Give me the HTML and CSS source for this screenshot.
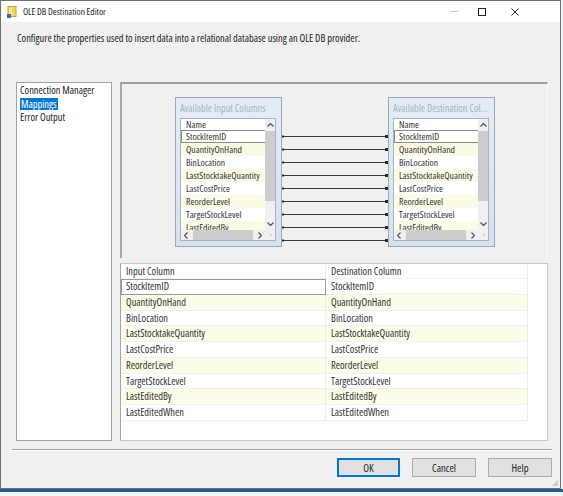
FILE: index.html
```html
<!DOCTYPE html>
<html>
<head>
<meta charset="utf-8">
<title>OLE DB Destination Editor</title>
<link rel="stylesheet" href="styles.css">
</head>
<body>
<div class="window">
  <div class="titlebar">
    <svg class="app-icon" width="10" height="12" viewBox="0 0 10 12">
      <rect x="1" y="0.5" width="8" height="10" fill="#f6d35b" stroke="#c9a227" stroke-width="1"/>
      <rect x="2" y="1.5" width="3" height="8" fill="#fbe69a"/>
      <rect x="0" y="8" width="4" height="4" fill="#2f6fb8"/>
    </svg>
    <span class="title">OLE DB Destination Editor</span>
    <div class="controls">
      <span class="ctl ctl-min"></span>
      <span class="ctl ctl-max"></span>
      <svg class="ctl ctl-close" width="8" height="8" viewBox="0 0 8 8"><path d="M0.5 0.5 L7.5 7.5 M7.5 0.5 L0.5 7.5" stroke="#222" stroke-width="1"/></svg>
    </div>
  </div>
  <div class="client">
    <p class="intro">Configure the properties used to insert data into a relational database using an OLE DB provider.</p>
    <div class="main">
      <ul class="nav">
        <li>Connection Manager</li>
        <li><span class="nav-sel">Mappings</span></li>
        <li>Error Output</li>
      </ul>
      <div class="pane">
        <div class="diagram">
          <div class="table-box">
            <div class="box-title">Available Input Columns</div>
            <div class="list">
              <div class="list-body">
                <div class="list-head">Name</div>
                <div class="row sel">StockItemID</div>
                <div class="row alt">QuantityOnHand</div>
                <div class="row">BinLocation</div>
                <div class="row alt">LastStocktakeQuantity</div>
                <div class="row">LastCostPrice</div>
                <div class="row alt">ReorderLevel</div>
                <div class="row">TargetStockLevel</div>
                <div class="row alt">LastEditedBy</div>
                <div class="row">LastEditedWhen</div>
              </div>
              <div class="vscroll">
                <svg class="arrow" width="7" height="4" viewBox="0 0 7 4"><path d="M0.5 3.5 L3.5 0.5 L6.5 3.5" fill="none" stroke="#505050" stroke-width="1.2"/></svg>
                <div class="vtrack"><div class="vthumb"></div></div>
                <svg class="arrow" width="7" height="4" viewBox="0 0 7 4"><path d="M0.5 0.5 L3.5 3.5 L6.5 0.5" fill="none" stroke="#505050" stroke-width="1.2"/></svg>
              </div>
              <div class="hscroll">
                <svg class="arrow" width="4" height="7" viewBox="0 0 4 7"><path d="M3.5 0.5 L0.5 3.5 L3.5 6.5" fill="none" stroke="#505050" stroke-width="1.2"/></svg>
                <div class="htrack"><div class="hthumb"></div></div>
                <svg class="arrow" width="4" height="7" viewBox="0 0 4 7"><path d="M0.5 0.5 L3.5 3.5 L0.5 6.5" fill="none" stroke="#505050" stroke-width="1.2"/></svg>
              </div>
              <div class="corner"></div>
            </div>
          </div>
          <svg class="links" width="106" height="150" viewBox="0 0 106 150">
            <g stroke="#3a3a3a" stroke-width="1">
              <path d="M0 39.5 H106 M0 52.5 H106 M0 65.5 H106 M0 78.5 H106 M0 91.5 H106 M0 104.5 H106 M0 117.5 H106 M0 130.5 H106 M0 143.5 H106"/>
            </g>
            <g fill="#2a2a2a">
              <rect x="0" y="38.5" width="2" height="2"/><rect x="103" y="38" width="3" height="3"/>
              <rect x="0" y="51.5" width="2" height="2"/><rect x="103" y="51" width="3" height="3"/>
              <rect x="0" y="64.5" width="2" height="2"/><rect x="103" y="64" width="3" height="3"/>
              <rect x="0" y="77.5" width="2" height="2"/><rect x="103" y="77" width="3" height="3"/>
              <rect x="0" y="90.5" width="2" height="2"/><rect x="103" y="90" width="3" height="3"/>
              <rect x="0" y="103.5" width="2" height="2"/><rect x="103" y="103" width="3" height="3"/>
              <rect x="0" y="116.5" width="2" height="2"/><rect x="103" y="116" width="3" height="3"/>
              <rect x="0" y="129.5" width="2" height="2"/><rect x="103" y="129" width="3" height="3"/>
              <rect x="0" y="142.5" width="2" height="2"/><rect x="103" y="142" width="3" height="3"/>
            </g>
          </svg>
          <div class="table-box">
            <div class="box-title">Available Destination Col...</div>
            <div class="list">
              <div class="list-body">
                <div class="list-head">Name</div>
                <div class="row sel">StockItemID</div>
                <div class="row alt">QuantityOnHand</div>
                <div class="row">BinLocation</div>
                <div class="row alt">LastStocktakeQuantity</div>
                <div class="row">LastCostPrice</div>
                <div class="row alt">ReorderLevel</div>
                <div class="row">TargetStockLevel</div>
                <div class="row alt">LastEditedBy</div>
                <div class="row">LastEditedWhen</div>
              </div>
              <div class="vscroll">
                <svg class="arrow" width="7" height="4" viewBox="0 0 7 4"><path d="M0.5 3.5 L3.5 0.5 L6.5 3.5" fill="none" stroke="#505050" stroke-width="1.2"/></svg>
                <div class="vtrack"><div class="vthumb"></div></div>
                <svg class="arrow" width="7" height="4" viewBox="0 0 7 4"><path d="M0.5 0.5 L3.5 3.5 L6.5 0.5" fill="none" stroke="#505050" stroke-width="1.2"/></svg>
              </div>
              <div class="hscroll">
                <svg class="arrow" width="4" height="7" viewBox="0 0 4 7"><path d="M3.5 0.5 L0.5 3.5 L3.5 6.5" fill="none" stroke="#505050" stroke-width="1.2"/></svg>
                <div class="htrack"><div class="hthumb"></div></div>
                <svg class="arrow" width="4" height="7" viewBox="0 0 4 7"><path d="M0.5 0.5 L3.5 3.5 L0.5 6.5" fill="none" stroke="#505050" stroke-width="1.2"/></svg>
              </div>
              <div class="corner"></div>
            </div>
          </div>
        </div>
        <div class="grid">
          <div class="grid-row grid-head"><div class="cell">Input Column</div><div class="cell">Destination Column</div></div>
          <div class="grid-row"><div class="cell focus">StockItemID</div><div class="cell">StockItemID</div></div>
          <div class="grid-row alt"><div class="cell">QuantityOnHand</div><div class="cell">QuantityOnHand</div></div>
          <div class="grid-row"><div class="cell">BinLocation</div><div class="cell">BinLocation</div></div>
          <div class="grid-row alt"><div class="cell">LastStocktakeQuantity</div><div class="cell">LastStocktakeQuantity</div></div>
          <div class="grid-row"><div class="cell">LastCostPrice</div><div class="cell">LastCostPrice</div></div>
          <div class="grid-row alt"><div class="cell">ReorderLevel</div><div class="cell">ReorderLevel</div></div>
          <div class="grid-row"><div class="cell">TargetStockLevel</div><div class="cell">TargetStockLevel</div></div>
          <div class="grid-row alt"><div class="cell">LastEditedBy</div><div class="cell">LastEditedBy</div></div>
          <div class="grid-row"><div class="cell">LastEditedWhen</div><div class="cell">LastEditedWhen</div></div>
        </div>
      </div>
    </div>
    <div class="sep"></div>
    <div class="buttons">
      <button class="btn btn-default">OK</button>
      <button class="btn">Cancel</button>
      <button class="btn">Help</button>
    </div>
    <span class="grip"></span>
  </div>
</div>
<div class="desk-edge"></div>
</body>
</html>
```
FILE: styles.css
```css
* { box-sizing: border-box; }
html, body { margin: 0; padding: 0; }
body {
  width: 563px;
  height: 496px;
  overflow: hidden;
  background: #f3f6f9;
  font-family: "Open Sans", "Noto Sans", sans-serif;
  font-stretch: 75%;
  color: #333;
}
.window {
  width: 561px;
  height: 489px;
  border: 1px solid #707070;
  background: #f0f0f0;
  display: flex;
  flex-direction: column;
}
.titlebar {
  flex: none;
  height: 21px;
  background: #fff;
  display: flex;
  align-items: center;
  padding-left: 6px;
}
.app-icon { display: block; margin-right: 6px; }
.title { font-size: 9.4px; color: #222; }
.controls {
  margin-left: auto;
  display: flex;
  align-items: center;
  padding-right: 41px;
}
.ctl { display: block; }
.ctl-min { width: 8px; height: 1px; background: #c4c4c4; margin-right: 20px; }
.ctl-max { width: 8px; height: 8px; border: 1px solid #222; margin-right: 25px; }
.client {
  flex: 1;
  position: relative;
  display: flex;
  flex-direction: column;
}
.intro {
  margin: 0;
  padding: 10px 0 0 16px;
  font-size: 10.4px;
  line-height: 12px;
  color: #222;
}
.main {
  margin-top: 38px;
  padding-left: 15px;
  display: flex;
  gap: 8px;
  height: 359px;
}
.nav {
  list-style: none;
  margin: 0;
  padding: 1px 0 0 3px;
  width: 96px;
  background: #fff;
  border: 1px solid #a3a3a3;
  font-size: 10.4px;
  color: #222;
}
.nav li { height: 13.5px; line-height: 13.5px; white-space: nowrap; }
.nav-sel {
  display: inline-block;
  background: #0078d7;
  color: #fff;
  line-height: 12px;
  padding: 0 1px;
}
.pane {
  width: 428px;
  display: flex;
  flex-direction: column;
  gap: 5px;
}
.diagram {
  height: 176px;
  border-top: 2px solid #a0a0a0;
  border-left: 2px solid #a8a8a8;
  border-right: 1px solid #fbfbfb;
  padding: 13px 0 0 53px;
  display: flex;
  align-items: flex-start;
}
.table-box {
  width: 107px;
  height: 150px;
  border: 1px solid #97aac0;
  background: linear-gradient(#e3ecf6, #d5e2ef);
  padding: 0 5px 5px 4px;
  display: flex;
  flex-direction: column;
}
.box-title {
  height: 20px;
  line-height: 20px;
  font-size: 10.3px;
  color: #a9b5c3;
  white-space: nowrap;
  overflow: hidden;
}
.list {
  flex: 1;
  background: #fff;
  border: 1px solid #a9b3bd;
  display: grid;
  grid-template-columns: 1fr 10px;
  grid-template-rows: 1fr 10px;
  overflow: hidden;
}
.list-body { overflow: hidden; font-size: 9.7px; }
.list-head { height: 11px; line-height: 11px; padding-left: 5px; }
.row {
  height: 13px;
  line-height: 13px;
  padding-left: 5px;
  white-space: nowrap;
}
.row.alt { background: #fbfbe5; }
.row.sel { border: 1px solid #8a8a8a; border-right: none; line-height: 11px; padding-left: 4px; }
.vscroll {
  display: flex;
  flex-direction: column;
  align-items: center;
  background: #f0f0f0;
}
.vscroll .arrow { flex: none; margin: 4px 0; }
.vtrack { flex: 1; width: 100%; }
.vthumb { margin-top: 0; height: 70px; width: 100%; background: #cdcdcd; }
.hscroll {
  display: flex;
  align-items: center;
  background: #f0f0f0;
  padding: 0 3px;
}
.hscroll .arrow { flex: none; }
.htrack { flex: 1; height: 100%; padding: 0 4px 0 5px; }
.hthumb { height: 100%; width: 60px; background: #cdcdcd; }
.corner {
  background: #f0f0f0 radial-gradient(circle, #b5b5b5 0.6px, transparent 0.8px) 5px 4px / 2px 2px no-repeat;
}
.links { display: block; flex: none; }
.grid {
  height: 178px;
  background: #fff;
  border: 1px solid #c9c9c9;
  border-left-color: #a4a4a4;
  font-size: 10.4px;
}
.grid-row {
  width: 407px;
  display: grid;
  grid-template-columns: 205px 202px;
  height: 15.75px;
  border-bottom: 1px solid #f0f0f0;
}
.grid-row.alt .cell { background: #fcfce8; }
.grid-head { height: 15px; }
.cell {
  line-height: 14.75px;
  padding-left: 5px;
  white-space: nowrap;
  border-right: 1px solid #ececec;
}
.cell.focus { border: 1px solid #9a9a9a; line-height: 13.75px; padding-left: 4px; }
.sep {
  margin: 8px 0 0 11px;
  width: 540px;
  border-top: 1px solid #a0a0a0;
  border-bottom: 1px solid #fff;
}
.buttons {
  margin-top: 7px;
  display: flex;
  justify-content: flex-end;
  gap: 12px;
  padding-right: 8px;
}
.btn {
  width: 64px;
  height: 19px;
  padding: 0;
  background: #e1e1e1;
  border: 1px solid #adadad;
  font-family: inherit;
  font-stretch: inherit;
  font-size: 10.6px;
  color: #222;
}
.btn-default { width: 63px; border: 2px solid #0078d7; }
.grip {
  position: absolute;
  right: 2px;
  bottom: 2px;
  width: 6px;
  height: 6px;
  background: radial-gradient(circle, #b8b8b8 0.6px, transparent 0.9px) 0 0 / 2px 2px;
  clip-path: polygon(100% 0, 100% 100%, 0 100%);
}
.desk-edge {
  height: 3px;
  background: #245c99;
}
```
